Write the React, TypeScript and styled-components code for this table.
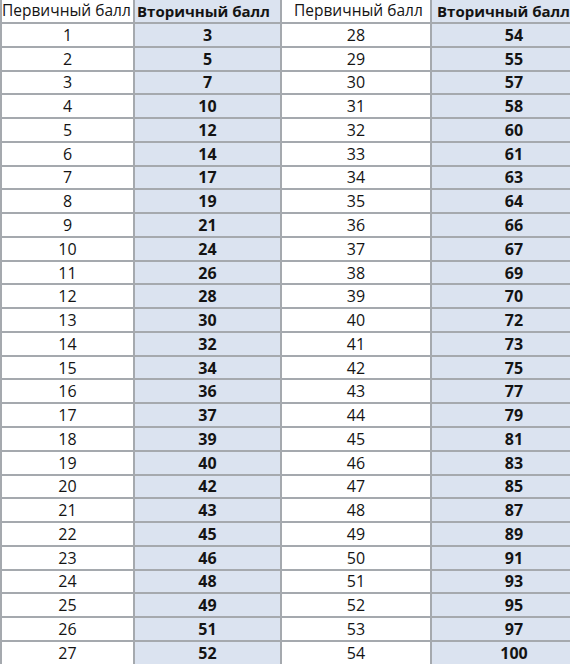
import React from 'react';
import styled, { createGlobalStyle } from 'styled-components';

const GlobalStyle = createGlobalStyle`
  html, body {
    margin: 0;
    padding: 0;
    background: #ffffff;
    overflow: hidden;
  }
`;

// таблица перевода баллов
const Sheet = styled.div`
  width: 570px;
  height: 664px;
  overflow: hidden;
  box-sizing: border-box;
  display: grid;
  grid-template-columns: 131px 145px 148px 164px;
  grid-template-rows: 22px;
  grid-auto-rows: 21.77px;
  column-gap: 2px;
  row-gap: 2px;
  padding-left: 2px;
  background: #a5a9ae;
  font-family: 'Open Sans', 'Noto Sans', sans-serif;
  color: #141414;
`;

const Cell = styled.div<{ $shaded?: boolean; $bold?: boolean }>`
  display: flex;
  align-items: center;
  justify-content: center;
  background: ${p => (p.$shaded ? '#dbe3f0' : '#ffffff')};
  font-size: 16px;
  font-weight: ${p => (p.$bold ? 700 : 400)};
  white-space: nowrap;
  line-height: 1;
`;

const HeadCell = styled(Cell)<{ $inset: number }>`
  justify-content: flex-start;
  padding-left: ${p => p.$inset}px;
  font-size: ${p => (p.$bold ? 15 : 15.5)}px;
  position: relative;
  z-index: 1;
`;

const secondary = [
  3, 5, 7, 10, 12, 14, 17, 19, 21, 24, 26, 28, 30, 32, 34, 36, 37, 39, 40, 42, 43, 45, 46, 48, 49, 51, 52,
  54, 55, 57, 58, 60, 61, 63, 64, 66, 67, 69, 70, 72, 73, 75, 77, 79, 81, 83, 85, 87, 89, 91, 93, 95, 97, 100,
];

export default function App() {
  const rows = Array.from({ length: 27 }, (_, i) => i);
  return (
    <>
      <GlobalStyle />
      <Sheet>
        <HeadCell $inset={0}>Первичный балл</HeadCell>
        <HeadCell $inset={2} $shaded $bold>Вторичный балл</HeadCell>
        <HeadCell $inset={12}>Первичный балл</HeadCell>
        <HeadCell $inset={5} $shaded $bold>Вторичный балл</HeadCell>
        {rows.map(i => (
          <React.Fragment key={i}>
            <Cell>{i + 1}</Cell>
            <Cell $shaded $bold>{secondary[i]}</Cell>
            <Cell>{i + 28}</Cell>
            <Cell $shaded $bold>{secondary[i + 27]}</Cell>
          </React.Fragment>
        ))}
      </Sheet>
    </>
  );
}
